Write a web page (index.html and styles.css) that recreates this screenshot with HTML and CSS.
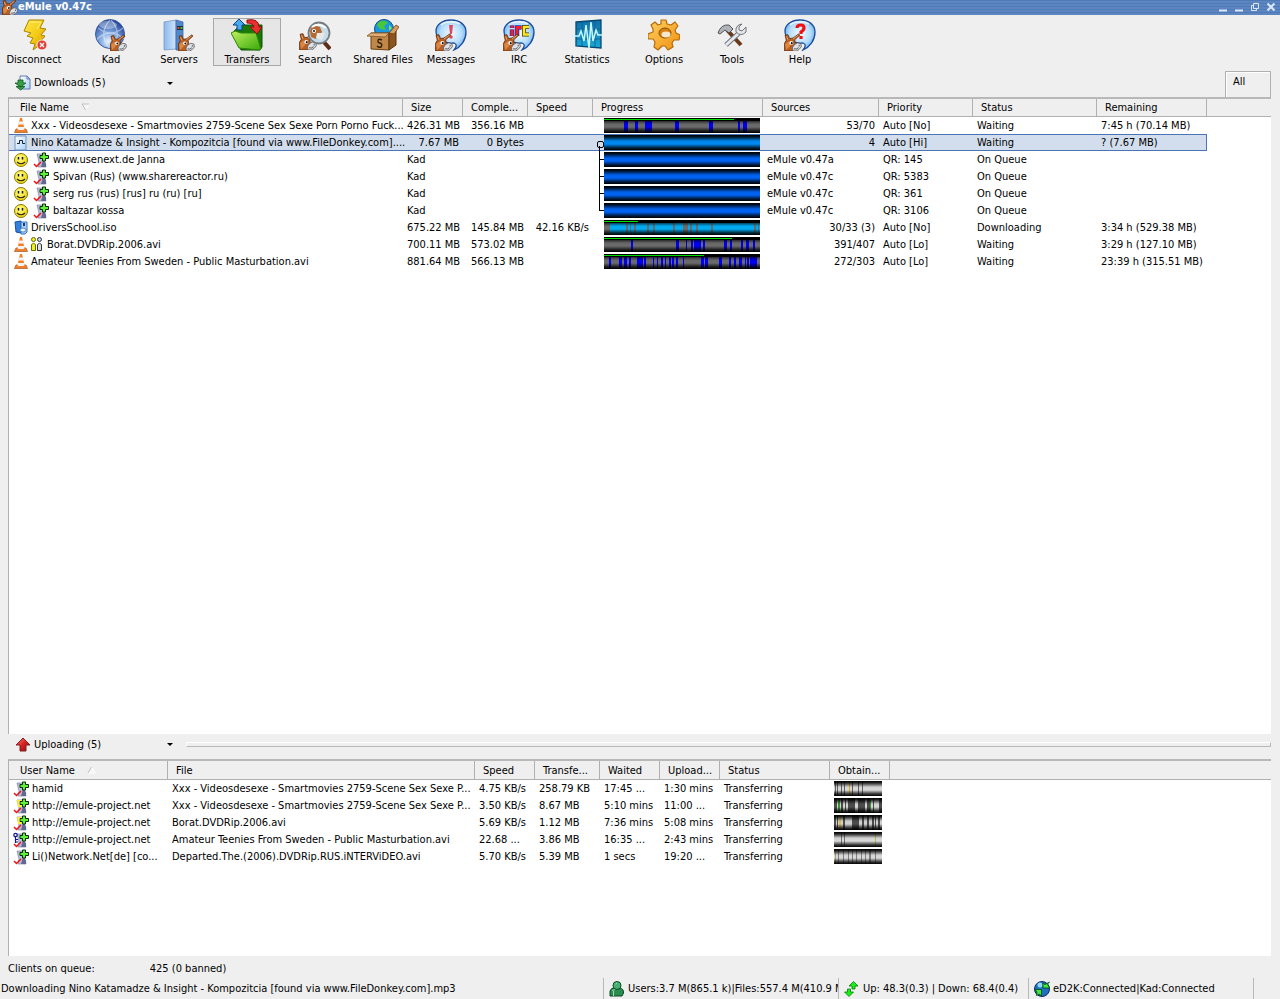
FILE: index.html
```html
<!DOCTYPE html>
<html lang="en">
<head>
<meta charset="utf-8">
<title>eMule v0.47c</title>
<link rel="stylesheet" href="styles.css">
</head>
<body>
<svg class="defs" width="0" height="0" aria-hidden="true">
  <defs>
    <linearGradient id="shade" x1="0" y1="0" x2="0" y2="1">
      <stop offset="0" stop-color="#000" stop-opacity="1"/><stop offset=".12" stop-color="#000" stop-opacity=".85"/>
      <stop offset=".4" stop-color="#000" stop-opacity=".08"/><stop offset=".6" stop-color="#000" stop-opacity=".04"/>
      <stop offset=".85" stop-color="#000" stop-opacity=".75"/><stop offset="1" stop-color="#000"/>
    </linearGradient>
    <linearGradient id="gold" x1="0" y1="0" x2="1" y2="1"><stop offset="0" stop-color="#ffe848"/><stop offset=".5" stop-color="#f4cc18"/><stop offset="1" stop-color="#d89c00"/></linearGradient>
    <radialGradient id="orb" cx=".45" cy=".75" r=".75"><stop offset="0" stop-color="#e8f4ff"/><stop offset=".4" stop-color="#7fa8e0"/><stop offset="1" stop-color="#1c3f96"/></radialGradient>
    <linearGradient id="tower" x1="0" y1="0" x2="1" y2="0"><stop offset="0" stop-color="#8db8ea"/><stop offset="1" stop-color="#cfe5fb"/></linearGradient>
    <linearGradient id="leaf" x1="0" y1="0" x2="1" y2="1"><stop offset="0" stop-color="#c0f060"/><stop offset="1" stop-color="#38a808"/></linearGradient>
    <radialGradient id="bub" cx=".5" cy=".45" r=".6"><stop offset="0" stop-color="#f4fbff"/><stop offset=".6" stop-color="#b4dcfa"/><stop offset="1" stop-color="#50a0ec"/></radialGradient>
    <linearGradient id="scope" x1="0" y1="0" x2="0" y2="1"><stop offset="0" stop-color="#1070a8"/><stop offset="1" stop-color="#18a8d8"/></linearGradient>
    <linearGradient id="gear" x1="0" y1="0" x2="1" y2="1"><stop offset="0" stop-color="#ffd060"/><stop offset="1" stop-color="#f09010"/></linearGradient>
    <radialGradient id="smile" cx=".4" cy=".35" r=".7"><stop offset="0" stop-color="#ffff90"/><stop offset="1" stop-color="#f0d000"/></radialGradient>
    <linearGradient id="redup" x1="0" y1="0" x2="1" y2="1"><stop offset="0" stop-color="#ff8078"/><stop offset=".5" stop-color="#d82020"/><stop offset="1" stop-color="#901010"/></linearGradient>
    <linearGradient id="bluefile" x1="0" y1="0" x2="1" y2="1"><stop offset="0" stop-color="#fff"/><stop offset="1" stop-color="#a8d0f8"/></linearGradient>

    <symbol id="mule" viewBox="0 0 16 16">
      <path d="M.5 16V9L2 6.500 1 2 3.500 1.500 5 5 8 4.500 13 .8 14 2 9.500 6 10 9 11 16Z" fill="#b86024" stroke="#5c2808" stroke-width=".7"/>
      <path d="M2.300 3 3.500 6M12.500 2 8 5.300" stroke="#eca870" stroke-width=".8"/>
      <path d="M1 10 4 7.500 6 8 5 12 2 15Z" fill="#dc8844"/>
      <circle cx="6.500" cy="8.800" r="1.700" fill="#fff"/><circle cx="6.900" cy="9" r=".9" fill="#111"/>
      <path d="M9 10.500Q12 7.500 15 9.500 16.500 12.500 13.500 14.500L11 16H8Q6.500 13 9 10.500Z" fill="#dde2e8" stroke="#4c4c50" stroke-width=".7"/><path d="M13.500 10.500V12M9 14Q11 15 13 13" fill="none" stroke="#444" stroke-width=".8"/>
    </symbol>
    <symbol id="bubble" viewBox="0 0 32 32">
      <path d="M16 1C25 1 31 6 31 13 31 21 26 28 19 31 22 27 22 25 19 24 9 25 1 20 1 12 1 6 7 1 16 1Z" fill="url(#bub)" stroke="#1c4c9c" stroke-width="1.3"/>
      <path d="M6 6C10 2 20 2 25 5" fill="none" stroke="#fff" stroke-opacity=".7" stroke-width="2"/>
    </symbol>
    <symbol id="cone" viewBox="0 0 16 16">
      <path d="M3 11H13L14.500 14.500H1.500Z" fill="#f08030" stroke="#a85818" stroke-width=".7"/>
      <path d="M7 0H9L11.700 12Q8 13.500 4.300 12Z" fill="#f08028"/><path d="M6.300 3.500H9.800L10.500 6.500H5.600ZM5 9H11L11.500 11.500Q8 12.500 4.500 11.500Z" fill="#f4f4f4"/>
    </symbol>
    <symbol id="smiley" viewBox="0 0 16 16">
      <circle cx="8" cy="8" r="6.500" fill="url(#smile)" stroke="#887800" stroke-width="1"/><path d="M5.500 5V7.500M9.500 5V7.500" stroke="#111" stroke-width="1.500"/><path d="M4 10Q8 13.500 12 10" fill="none" stroke="#222" stroke-width="1.100"/>
    </symbol>
    <symbol id="client" viewBox="0 0 16 16">
      <path d="M4 2H10L11 9 13 15H5L6 10Z" fill="#b8bcd8" stroke="#8088a8" stroke-width=".7"/><path d="M10 8Q14 10 13 15H8Z" fill="#606894"/>
      <path d="M9.500 1H12.500V3.500H15.500V6.500H12.500V9H9.500V6.500H7V3.500H9.500Z" fill="#60f038" stroke="#062806" stroke-width="1"/>
      <path d="M1 12 3.500 14.500 8 10" fill="none" stroke="#f01010" stroke-width="1.500"/>
    </symbol>
    <symbol id="client-y" viewBox="0 0 16 16"><use href="#client"/><path d="M4 2H9V3H6.500V7H9V9H5Z" fill="#f8f030"/></symbol>
    <symbol id="client-k" viewBox="0 0 16 16"><use href="#client"/><path d="M2.500 5V11M2.500 7.500H5M2.500 10H5" stroke="#101888" stroke-width="1.200"/><circle cx="2.500" cy="3" r="1.700" fill="#fff" stroke="#101888" stroke-width="1.200"/></symbol>
    <symbol id="blue" viewBox="0 0 156 15"><path d="M0 0H156V15H0Z" fill="#0068ff"/><path d="M0 0H156V15H0Z" fill="url(#shade)"/></symbol>
  </defs>
</svg>

<header class="titlebar">
  <svg class="i16" viewBox="0 0 16 16"><use href="#mule"/></svg>
  <h1>eMule v0.47c</h1>
  <button type="button" aria-label="Minimize to tray"><svg viewBox="0 0 10 10"><path d="M1 8.500H9" stroke-width="2"/></svg></button>
  <button type="button" aria-label="Minimize"><svg viewBox="0 0 10 10"><path d="M1 8.500H9" stroke-width="2"/></svg></button>
  <button type="button" aria-label="Restore"><svg viewBox="0 0 10 10"><path d="M3.500 1.500H8.500V6.500H3.500ZM3 3.500H1.500V8.500H6.500V7"/></svg></button>
  <button type="button" aria-label="Close"><svg viewBox="0 0 10 10"><path d="M1.500 1.500 8.500 8.500M8.500 1.500 1.500 8.500" stroke-width="2"/></svg></button>
</header>

<nav class="toolbar">
  <button type="button"><svg viewBox="0 0 32 32"><path d="M11 1 26 1 22 9 28 10 23 16 27 17 22 23 23 25 15 31 17 25 12 24 15 19 9 17 13 14 6 12Z" fill="url(#gold)" stroke="#a88400"/><path d="M12 3 23 3 19 10" fill="none" stroke="#fff080"/><circle cx="24" cy="26" r="5" fill="#e04038" stroke="#fff" stroke-width=".8"/><path d="M22 24 26 28M26 24 22 28" stroke="#fff" stroke-width="1.300"/></svg>Disconnect</button>
  <span class="gap"></span>
  <button type="button"><svg viewBox="0 0 32 32"><circle cx="15" cy="15" r="14.500" fill="url(#orb)" stroke="#3c5ca0"/><path d="M3 9Q16 19 28 9M2 20Q16 8 29 20M15 1Q3 14 14 29M16 1Q28 14 17 29" fill="none" stroke="#fff" stroke-opacity=".45" stroke-width="1.200"/><ellipse cx="13" cy="6" rx="9" ry="4" fill="#fff" opacity=".35"/><use href="#mule" x="15" y="15" width="17" height="17"/></svg>Kad</button>
  <button type="button"><svg viewBox="0 0 32 32"><path d="M1 3 13 1V30L1 31Z" fill="url(#tower)" stroke="#7898c8" stroke-width=".8"/><path d="M13 1 20 3V31H13Z" fill="#5088cc" stroke="#3c68a8" stroke-width=".8"/><path d="M14 7H20V11H14Z" fill="#183048"/><path d="M14.500 9H16.500" stroke="#f04020" stroke-width="2"/><path d="M17.500 9H19.500" stroke="#30d030" stroke-width="2"/><use href="#mule" x="15" y="15" width="17" height="17"/></svg>Servers</button>
  <button type="button" class="on" aria-pressed="true"><svg viewBox="0 0 32 32"><path d="M3 12 10 6H31V28L29 31H10Z" fill="#187808" stroke="#0c5004"/><path d="M0 14 4 12 10 14H25L30 30 28 31 8 29Z" fill="url(#leaf)" stroke="#2c8408"/><path d="M8 0 14 6H11V11H6V6H2Z" fill="#48a8f0" stroke="#0c4088"/><path d="M16 1Q28-1 28 8H31L26 15 19 8H23Q22 4 16 4Z" fill="#e83030" stroke="#980c0c"/></svg>Transfers</button>
  <button type="button"><svg viewBox="0 0 32 32"><use href="#mule" x="0" y="13" width="18" height="18"/><path d="M24 22 31 30" stroke="#5c2c18" stroke-width="4"/><circle cx="20" cy="14" r="10.500" fill="#c4dcec" stroke="#777c80" stroke-width="1.800"/><path d="M11 12Q13 5 21 8L23 13 17 20 12 18Z" fill="#b46834"/><path d="M18 14 26 14 23 21 17 19Z" fill="#e8e8e8"/><circle cx="15" cy="12" r="2" fill="#fff"/><circle cx="15" cy="12" r="1" fill="#111"/><path d="M13 8Q20 3 27 9" fill="none" stroke="#fff" stroke-width="2"/></svg>Search</button>
  <button type="button"><svg viewBox="0 0 32 32"><circle cx="17" cy="10" r="9.500" fill="#1898e0" stroke="#104880"/><path d="M12 3Q18 0 21 4L17 7 19 11 13 10 10 6Z" fill="#48c838"/><path d="M22 6 25 9 22 12Z" fill="#88e060"/><path d="M4 14H22V31L4 30Z" fill="#c08848" stroke="#704010"/><path d="M22 14 29 11V26L22 31Z" fill="#8c5420" stroke="#5c3008"/><path d="M4 14 0 17 18 18 22 14Z" fill="#e0b078" stroke="#805020" stroke-width=".8"/><path d="M22 14 29 6 32 8 27 15Z" fill="#d8a060" stroke="#704010" stroke-width=".8"/><path d="M15 21Q11 19 11 22 11 24 13 24 16 25 14 28 12 29 10 27" fill="none" stroke="#382008" stroke-width="1.400"/></svg>Shared Files</button>
  <button type="button"><svg viewBox="0 0 32 32"><use href="#bubble"/><path d="M14 6H18L17 15H15Z" fill="#e04860"/><circle cx="16" cy="18" r="1.800" fill="#e04860"/><use href="#mule" x="0" y="14" width="18" height="18"/></svg>Messages</button>
  <button type="button"><svg viewBox="0 0 32 32"><use href="#bubble"/><path d="M9 10.500V17M9 6.500V9" stroke="#2030c0" stroke-width="4.500"/><path d="M9 10.500V17M9 6.500V9" stroke="#f02020" stroke-width="2.800"/><path d="M14 17V8.500H18.500" fill="none" stroke="#2030c0" stroke-width="4.500"/><path d="M14 17V8.500H18.500" fill="none" stroke="#f02020" stroke-width="2.800"/><path d="M26 8H21V15.500H26" fill="none" stroke="#403800" stroke-width="4"/><path d="M26 8H21V15.500H26" fill="none" stroke="#ffe820" stroke-width="2.500"/><use href="#mule" x="0" y="14" width="18" height="18"/></svg>IRC</button>
  <button type="button"><svg viewBox="0 0 32 32"><path d="M5 3 30 1V29L5 27Z" fill="url(#scope)" stroke="#084870" stroke-width="1.300"/><path d="M5 10H29M5 20H29M11 3V27M24 2V28" stroke="#0c5888" stroke-width=".7"/><path d="M1 17H8L10 12 13 22 15 6 18 29 20 3 22 22 25 11 27 16H32" fill="none" stroke="#c8f8ff" stroke-width="1.500"/></svg>Statistics</button>
  <span class="gap"></span>
  <button type="button"><svg viewBox="0 0 32 32"><path d="M13 1 18 1 19 5 23 6 27 3 30 7 27 11 28 14 32 16 31 21 26 21 24 24 25 28 20 31 17 27 14 27 10 31 6 28 7 23 5 20 0 20 0 15 5 13 5 10 3 6 7 3 10 6 13 5Z" fill="url(#gear)" stroke="#b46c08" stroke-width="1.200" stroke-linejoin="round"/><ellipse cx="17" cy="14" rx="6" ry="5" fill="#d88010" stroke="#8c5000"/><ellipse cx="18" cy="15.500" rx="4.500" ry="3" fill="#f6e8cc"/></svg>Options</button>
  <button type="button"><svg viewBox="0 0 32 32"><path d="M11 11 25 26" stroke="#683818" stroke-width="4"/><path d="M2 14Q5 5 13 6L17 10 13 14 9 11 4 15Z" fill="#b0b4b8" stroke="#505458"/><path d="M10 26 23 14" stroke="#70747a" stroke-width="5"/><path d="M10 26 23 14" stroke="#e4e8ec" stroke-width="3"/><path d="M26 5Q19 6 20 13 25 18 30 13L30 8 26 12 23 11 23 8Z" fill="#e4e8ec" stroke="#70747a"/></svg>Tools</button>
  <button type="button"><svg viewBox="0 0 32 32"><use href="#bubble"/><path d="M13 9Q13 6 17 6 20 6 20 9 20 11 17 13V15" fill="none" stroke="#f01010" stroke-width="3.200"/><path d="M15.400 17H18.600V20H15.400Z" fill="#f01010"/><use href="#mule" x="0" y="14" width="18" height="18"/></svg>Help</button>
</nav>

<main>
  <div class="listhead">
    <button type="button" class="drop"><svg class="i16" viewBox="0 0 16 16"><path d="M5 1H12L15 4V14H5Z" fill="url(#bluefile)" stroke="#6078b0"/><path d="M12 1V4H15" fill="none" stroke="#6078b0"/><path d="M3 5H8V8H11L5.500 12 0 8H3ZM1 11.500H10L5.500 15Z" fill="#38a048" stroke="#105820" stroke-width=".8"/></svg><span>Downloads (5)</span><i class="caret"></i></button>
    <button type="button" class="tab">All</button>
  </div>
  <section class="panel downloads" aria-label="Downloads">
    <table>
      <colgroup><col class="w394"><col class="w60"><col class="w65"><col class="w65"><col class="w170"><col class="w116"><col class="w94"><col class="w124"><col class="w110"><col></colgroup>
      <thead><tr><th>File Name<svg class="sort" viewBox="0 0 9 8"><path d="M1 1H8L4.500 7Z" fill="#f4f4f4" stroke="#fff"/><path d="M8 1H1L4.500 7" fill="none" stroke="#bbb"/></svg></th><th>Size</th><th>Comple...</th><th>Speed</th><th>Progress</th><th>Sources</th><th>Priority</th><th>Status</th><th>Remaining</th><th></th></tr></thead>
      <tbody>
        <tr><td><div class="name"><svg class="i16" viewBox="0 0 16 16"><use href="#cone"/></svg>Xxx - Videosdesexe - Smartmovies 2759-Scene Sex Sexe Porn Porno Fuck...</div></td><td class="r">426.31 MB</td><td class="r">356.16 MB</td><td></td>
          <td class="bar"><svg viewBox="0 0 156 15" preserveAspectRatio="none"><path d="M0 0H156V15H0Z" fill="#707070"/><path fill="#0000ff" d="M20 0h4v15h-4zM31 0h3v15h-3zM41 0h7v15h-7zM71 0h4v15h-4zM105 0h4v15h-4zM134 0h2v15h-2zM139 0h4v15h-4z"/><path d="M0 0H156V15H0Z" fill="url(#shade)"/><path d="M0 0H156V3H0Z"/><path d="M0 1H130V2H0Z" fill="#00e000"/></svg></td><td class="r">53/70</td><td>Auto [No]</td><td>Waiting</td><td>7:45 h (70.14 MB)</td><td></td></tr>
        <tr class="sel"><td><div class="name"><svg class="i16" viewBox="0 0 16 16"><path d="M2 1H13V15H2Z" fill="url(#bluefile)" stroke="#7090b8"/><path d="M4 8.500H6.500V5.500H9.500V8.500H12" fill="none" stroke="#123"/></svg>Nino Katamadze &amp; Insight - Kompozitcia [found via www.FileDonkey.com]....</div></td><td class="r">7.67 MB</td><td class="r">0 Bytes</td><td></td>
          <td class="bar root"><svg viewBox="0 0 156 15" preserveAspectRatio="none"><path d="M0 0H156V15H0Z" fill="#0090ff"/><path d="M0 0H156V15H0Z" fill="url(#shade)"/></svg></td><td class="r">4</td><td>Auto [Hi]</td><td>Waiting</td><td>? (7.67 MB)</td><td></td></tr>
        <tr><td><div class="name src"><svg class="i16" viewBox="0 0 16 16"><use href="#smiley"/></svg><svg class="i16" viewBox="0 0 16 16"><use href="#client"/></svg>www.usenext.de Janna</div></td><td>Kad</td><td></td><td></td><td class="bar kid"><svg viewBox="0 0 156 15" preserveAspectRatio="none"><use href="#blue"/></svg></td><td>eMule v0.47a</td><td>QR: 145</td><td>On Queue</td><td></td><td></td></tr>
        <tr><td><div class="name src"><svg class="i16" viewBox="0 0 16 16"><use href="#smiley"/></svg><svg class="i16" viewBox="0 0 16 16"><use href="#client"/></svg>Spivan (Rus) (www.sharereactor.ru)</div></td><td>Kad</td><td></td><td></td><td class="bar kid"><svg viewBox="0 0 156 15" preserveAspectRatio="none"><use href="#blue"/></svg></td><td>eMule v0.47c</td><td>QR: 5383</td><td>On Queue</td><td></td><td></td></tr>
        <tr><td><div class="name src"><svg class="i16" viewBox="0 0 16 16"><use href="#smiley"/></svg><svg class="i16" viewBox="0 0 16 16"><use href="#client"/></svg>serg rus (rus) [rus] ru (ru) [ru]</div></td><td>Kad</td><td></td><td></td><td class="bar kid"><svg viewBox="0 0 156 15" preserveAspectRatio="none"><use href="#blue"/></svg></td><td>eMule v0.47c</td><td>QR: 361</td><td>On Queue</td><td></td><td></td></tr>
        <tr><td><div class="name src"><svg class="i16" viewBox="0 0 16 16"><use href="#smiley"/></svg><svg class="i16" viewBox="0 0 16 16"><use href="#client"/></svg>baltazar kossa</div></td><td>Kad</td><td></td><td></td><td class="bar kid last"><svg viewBox="0 0 156 15" preserveAspectRatio="none"><use href="#blue"/></svg></td><td>eMule v0.47c</td><td>QR: 3106</td><td>On Queue</td><td></td><td></td></tr>
        <tr><td><div class="name"><svg class="i16" viewBox="0 0 16 16"><path d="M2 2 8 1V13L3 12Z" fill="#3080e0" stroke="#1850a0"/><path d="M8 2H14V12Q13 15 8 14Z" fill="#a8d0f8" stroke="#3870b8"/><path d="M10 3H12V6H10Z" fill="#203868"/><ellipse cx="10" cy="10" rx="3" ry="2" fill="#e8f4ff" stroke="#3870b8" stroke-width=".8"/></svg>DriversSchool.iso</div></td><td class="r">675.22 MB</td><td class="r">145.84 MB</td><td class="r">42.16 KB/s</td>
          <td class="bar"><svg viewBox="0 0 156 15" preserveAspectRatio="none"><path d="M0 0H156V15H0Z" fill="#00b4ff"/><path fill="#707070" d="M0 0h6v15h-6zM22 0h2v15h-2zM26 0h1v15h-1zM30 0h2v15h-2zM43 0h2v15h-2zM49 0h2v15h-2zM69 0h2v15h-2zM79 0h5v15h-5zM86 0h2v15h-2zM92 0h2v15h-2zM107 0h2v15h-2zM150 0h2v15h-2zM154 0h1v15h-1z"/><path d="M0 0H156V15H0Z" fill="url(#shade)"/><path d="M0 0H156V3H0Z"/><path d="M0 1H34V2H0Z" fill="#00e000"/></svg></td><td class="r">30/33 (3)</td><td>Auto [No]</td><td>Downloading</td><td>3:34 h (529.38 MB)</td><td></td></tr>
        <tr><td><div class="name"><svg class="i16" viewBox="0 0 16 16"><use href="#cone"/></svg><svg class="i16 pair" viewBox="0 0 16 16"><g stroke="#686800"><circle cx="2.500" cy="2.500" r="2" fill="#f0f020"/><path d="M.5 7.500Q2.500 5 4.500 7.500V13.500H.5Z" fill="#f0f020"/></g><g stroke="#333"><circle cx="8.500" cy="2.500" r="2" fill="#c8d8e8"/><path d="M6.500 7.500Q8.500 5 10.500 7.500V13.500H6.500Z" fill="#e0e0e0"/></g></svg>Borat.DVDRip.2006.avi</div></td><td class="r">700.11 MB</td><td class="r">573.02 MB</td><td></td>
          <td class="bar"><svg viewBox="0 0 156 15" preserveAspectRatio="none"><path d="M0 0H156V15H0Z" fill="#707070"/><path fill="#0000ff" d="M27 0h2v15h-2zM72 0h3v15h-3zM82 0h1v15h-1zM87 0h2v15h-2zM90 0h7v15h-7zM99 0h2v15h-2zM120 0h3v15h-3zM126 0h2v15h-2zM137 0h2v15h-2zM142 0h3v15h-3zM149 0h2v15h-2z"/><path d="M0 0H156V15H0Z" fill="url(#shade)"/><path d="M0 0H156V3H0Z"/><path d="M0 1H128V2H0Z" fill="#00e000"/></svg></td><td class="r">391/407</td><td>Auto [Lo]</td><td>Waiting</td><td>3:29 h (127.10 MB)</td><td></td></tr>
        <tr><td><div class="name"><svg class="i16" viewBox="0 0 16 16"><use href="#cone"/></svg>Amateur Teenies From Sweden - Public Masturbation.avi</div></td><td class="r">881.64 MB</td><td class="r">566.13 MB</td><td></td>
          <td class="bar"><svg viewBox="0 0 156 15" preserveAspectRatio="none"><path d="M0 0H156V15H0Z" fill="#707070"/><path fill="#0000ff" d="M5 0h2v15h-2zM15 0h3v15h-3zM20 0h3v15h-3zM25 0h2v15h-2zM33 0h6v15h-6zM40 0h2v15h-2zM49 0h1v15h-1zM53 0h1v15h-1zM57 0h2v15h-2zM61 0h1v15h-1zM65 0h2v15h-2zM68 0h2v15h-2zM72 0h2v15h-2zM79 0h1v15h-1zM97 0h3v15h-3zM101 0h3v15h-3zM115 0h3v15h-3zM125 0h2v15h-2zM130 0h2v15h-2zM135 0h3v15h-3zM141 0h1v15h-1zM143 0h2v15h-2zM146 0h7v15h-7z"/><path d="M0 0H156V15H0Z" fill="url(#shade)"/><path d="M0 0H156V3H0Z"/><path d="M0 1H100V2H0Z" fill="#00e000"/></svg></td><td class="r">272/303</td><td>Auto [Lo]</td><td>Waiting</td><td>23:39 h (315.51 MB)</td><td></td></tr>
      </tbody>
    </table>
  </section>

  <div class="listhead up">
    <button type="button" class="drop"><svg class="i16" viewBox="0 0 16 16"><path d="M8 1 15 8H11V14H5V8H1Z" fill="url(#redup)" stroke="#802020"/></svg><span>Uploading (5)</span><i class="caret"></i></button>
    <div class="splitter"></div>
  </div>
  <section class="panel uploads" aria-label="Uploading">
    <table>
      <colgroup><col class="w159"><col class="w307"><col class="w60"><col class="w65"><col class="w60"><col class="w60"><col class="w110"><col class="w60"><col></colgroup>
      <thead><tr><th>User Name<svg class="sort" viewBox="0 0 9 8"><path d="M1 7H8L4.500 1Z" fill="#f4f4f4" stroke="#fff"/><path d="M1 7 4.500 1" stroke="#bbb"/></svg></th><th>File</th><th>Speed</th><th>Transfe...</th><th>Waited</th><th>Upload...</th><th>Status</th><th>Obtain...</th><th></th></tr></thead>
      <tbody>
        <tr><td><div class="name"><svg class="i16" viewBox="0 0 16 16"><use href="#client"/></svg>hamid</div></td><td>Xxx - Videosdesexe - Smartmovies 2759-Scene Sex Sexe P...</td><td>4.75 KB/s</td><td>258.79 KB</td><td>17:45 ...</td><td>1:30 mins</td><td>Transferring</td><td class="bar"><svg viewBox="0 0 48 15" preserveAspectRatio="none"><path d="M0 0H48V15H0Z" fill="#e4e4e4"/><path fill="#666" d="M1 0h1v15h-1zM3 0h1v15h-1zM7 0h1v15h-1zM10 0h1v15h-1zM18 0h1v15h-1zM24 0h1v15h-1zM28 0h1v15h-1z"/><path fill="#e8b820" d="M15 0h1v15h-1z"/><path d="M0 0H48V15H0Z" fill="url(#shade)"/></svg></td><td></td></tr>
        <tr><td><div class="name"><svg class="i16" viewBox="0 0 16 16"><use href="#client-y"/></svg>http://emule-project.net</div></td><td>Xxx - Videosdesexe - Smartmovies 2759-Scene Sex Sexe P...</td><td>3.50 KB/s</td><td>8.67 MB</td><td>5:10 mins</td><td>11:00 ...</td><td>Transferring</td><td class="bar"><svg viewBox="0 0 48 15" preserveAspectRatio="none"><path d="M0 0H48V15H0Z" fill="#e0e0e0"/><path fill="#505050" d="M0 0h3v15h-3zM7 0h2v15h-2zM11 0h1v15h-1zM14 0h7v15h-7zM24 0h7v15h-7zM33 0h3v15h-3zM39 0h1v15h-1zM45 0h3v15h-3z"/><path fill="#38a030" d="M4 0h2v15h-2zM36 0h1v15h-1z"/><path d="M0 0H48V15H0Z" fill="url(#shade)"/></svg></td><td></td></tr>
        <tr><td><div class="name"><svg class="i16" viewBox="0 0 16 16"><use href="#client-y"/></svg>http://emule-project.net</div></td><td>Borat.DVDRip.2006.avi</td><td>5.69 KB/s</td><td>1.12 MB</td><td>7:36 mins</td><td>5:08 mins</td><td>Transferring</td><td class="bar"><svg viewBox="0 0 48 15" preserveAspectRatio="none"><path d="M0 0H48V15H0Z" fill="#dcdcdc"/><path fill="#505050" d="M0 0h2v15h-2zM3 0h1v15h-1zM9 0h2v15h-2zM18 0h7v15h-7zM28 0h2v15h-2zM33 0h2v15h-2zM38 0h2v15h-2zM41 0h1v15h-1zM44 0h2v15h-2z"/><path fill="#e8c850" d="M5 0h2v15h-2z"/><path d="M0 0H48V15H0Z" fill="url(#shade)"/></svg></td><td></td></tr>
        <tr><td><div class="name"><svg class="i16" viewBox="0 0 16 16"><use href="#client-k"/></svg>http://emule-project.net</div></td><td>Amateur Teenies From Sweden - Public Masturbation.avi</td><td>22.68 ...</td><td>3.86 MB</td><td>16:35 ...</td><td>2:43 mins</td><td>Transferring</td><td class="bar"><svg viewBox="0 0 48 15" preserveAspectRatio="none"><path d="M0 0H48V15H0Z" fill="#e4e4e4"/><path fill="#777" d="M7 0h1v15h-1zM10 0h1v15h-1z"/><path fill="#c8c850" d="M41 0h1v15h-1z"/><path d="M0 0H48V15H0Z" fill="url(#shade)"/></svg></td><td></td></tr>
        <tr><td><div class="name"><svg class="i16" viewBox="0 0 16 16"><use href="#client"/></svg>Li()Network.Net[de] [co...</div></td><td>Departed.The.(2006).DVDRip.RUS.iNTERViDEO.avi</td><td>5.70 KB/s</td><td>5.39 MB</td><td>1 secs</td><td>19:20 ...</td><td>Transferring</td><td class="bar"><svg viewBox="0 0 48 15" preserveAspectRatio="none"><path d="M0 0H48V15H0Z" fill="#e4e4e4"/><path fill="#888" d="M4 0h1v15h-1zM9 0h1v15h-1zM14 0h1v15h-1zM18 0h1v15h-1zM22 0h1v15h-1zM27 0h1v15h-1zM31 0h1v15h-1zM35 0h2v15h-2zM41 0h1v15h-1z"/><path fill="#b8b060" d="M1 0h1v15h-1z"/><path d="M0 0H48V15H0Z" fill="url(#shade)"/></svg></td><td></td></tr>
      </tbody>
    </table>
  </section>
  <div class="queue"><span>Clients on queue:</span><span>425 (0 banned)</span></div>
</main>

<footer class="status">
  <div class="msg">Downloading Nino Katamadze &amp; Insight - Kompozitcia [found via www.FileDonkey.com].mp3</div>
  <div><svg class="i16" viewBox="0 0 16 16"><path d="M1 14V10Q2 6.500 6 7H11Q15 8 14.500 12L13 15H1Z" fill="#2c8c50" stroke="#0c4824"/><circle cx="8" cy="4.500" r="4" fill="#48b070" stroke="#0c4824"/><path d="M4.500 10V15M3 9.500 6 8.500M6.500 3 8 2" stroke="#98e0b0" fill="none"/></svg>Users:3.7 M(865.1 k)|Files:557.4 M(410.9 M</div>
  <div><svg class="i16" viewBox="0 0 16 16"><g fill="#18f018" stroke="#087808" stroke-width=".8"><path d="M9.500 .5 14 5H11V8H8V5H5Z"/><path d="M5 15.500 .5 11H3.500V8H6.500V11H9.500Z"/></g></svg>Up: 48.3(0.3) | Down: 68.4(0.4)</div>
  <div><svg class="i16" viewBox="0 0 16 16"><circle cx="8" cy="8" r="7.500" fill="#2070c0" stroke="#0c2860"/><circle cx="6" cy="4" r="2.500" fill="#90d8f8"/><path d="M15.500 1 13.500 3 15.500 7H9V2L11 3.500ZM1 8.500H7.500V15L5.500 13 2.500 14.500 3 11Z" fill="#40e840" stroke="#044808" stroke-width=".8"/></svg>eD2K:Connected|Kad:Connected</div>
  <div></div>
</footer>
</body>
</html>
```
FILE: styles.css
```css
* { box-sizing: border-box; }
body {
  margin: 0;
  height: 100vh;
  display: flex;
  flex-direction: column;
  overflow: hidden;
  background: #efefef;
  color: #000;
  font: 11px/14px "DejaVu Sans Condensed", "DejaVu Sans", sans-serif;
}
button { font: inherit; color: inherit; border: 0; padding: 0; background: none; }
svg { display: block; flex: none; }
.defs { position: absolute; }
.i16 { width: 16px; height: 16px; }

.titlebar {
  display: flex;
  align-items: center;
  gap: 6px;
  height: 15px;
  padding: 0 4px 2px 2px;
  background: repeating-linear-gradient(#4f7ab8 0 1px, #5d86c0 1px 3px);
  color: #fff;
}
.titlebar h1 { flex: 1; margin: 0 0 0 -6px; font-size: 11px; line-height: 12px; }
.titlebar button svg { width: 10px; height: 10px; fill: none; stroke: #dce8fa; }

.toolbar { display: flex; height: 52px; padding-top: 3px; }
.toolbar button {
  display: flex;
  flex-direction: column;
  align-items: center;
  width: 68px;
  height: 48px;
  line-height: 14px;
  white-space: nowrap;
}
.toolbar button svg { width: 32px; height: 32px; margin: 1px 0 2px; }
.toolbar .on { border: 1px solid #a8a8a8; background: #e6e6e6; }
.toolbar .on svg { margin-top: 0; }
.toolbar .gap { width: 9px; }

main { flex: 1; display: flex; flex-direction: column; min-height: 0; padding: 0 9px 0 8px; }
.listhead { display: flex; align-items: center; height: 30px; padding-top: 2px; }
.drop { display: flex; align-items: center; width: 172px; padding-left: 7px; text-align: left; }
.drop span { flex: 1; padding-left: 3px; white-space: nowrap; }
.caret { width: 0; height: 0; margin-right: 7px; border: 3px solid transparent; border-top-color: #000; border-bottom: 0; }
.tab {
  align-self: flex-end;
  width: 46px;
  height: 26px;
  margin-left: auto;
  padding: 0 0 6px 7px;
  text-align: left;
  border: 1px solid #b0b0b0;
  border-bottom: 0;
  box-shadow: inset 1px 1px #fff;
}
.up { height: 25px; padding: 0 0 4px; }
.splitter { flex: 1; height: 5px; margin-left: 6px; border: 1px solid #fff; border-bottom-color: #b8b8b8; border-right-color: #b8b8b8; }

.panel { min-height: 0; overflow: hidden; background: #fff; border-top: 2px solid #b8b8b8; border-left: 1px solid #b0b0b0; }
.downloads { flex: 1; }
.uploads { flex: 0 1 197px; }
table { width: 100%; table-layout: fixed; border-collapse: separate; border-spacing: 0; }
th {
  height: 18px;
  padding: 0 0 0 8px;
  background: #efefef;
  border-right: 1px solid #b0b0b0;
  border-bottom: 1px solid #b0b0b0;
  font-weight: normal;
  text-align: left;
  white-space: nowrap;
  overflow: hidden;
}
.uploads th { height: 19px; padding-top: 1px; }
th:first-child { padding-left: 11px; }
th:last-child { border-right: 0; }
.sort { display: inline-block; width: 9px; height: 8px; margin-left: 12px; }
td { height: 17px; padding: 1px 4px 0; line-height: 16px; white-space: nowrap; }
td:first-child { padding: 1px 0 0 4px; }
.r { text-align: right; }
.name { display: flex; align-items: center; height: 16px; gap: 2px; }
.name .pair { margin-right: -2px; }
.src { gap: 4px; }
.sel td { line-height: 14px; background: #d2deed; border: 1px solid #4a74b4; border-width: 1px 0; }
.sel .name { height: 14px; }
.sel td:nth-last-child(2) { border-right-width: 1px; }
.sel td:last-child { background: none; border: 0; }
.bar { position: relative; padding: 1px 3px 1px 11px; }
.bar svg { width: 100%; height: 15px; }
.sel .bar { padding-top: 0; padding-bottom: 0; }
.uploads .bar { padding: 1px 8px 1px 4px; }
.uploads .name { gap: 3px; }
/* tree connectors between a file and its sources */
.kid::before { content: ""; position: absolute; left: 6px; top: 0; width: 1px; height: 17px; background: #000; }
.kid::after { content: ""; position: absolute; left: 6px; top: 8px; width: 5px; height: 1px; background: #000; }
.last::before { height: 9px; }
.root::before { content: ""; position: absolute; left: 4px; top: 6px; width: 5px; height: 5px; border: 1px solid #000; border-radius: 2px; }
.root::after { content: ""; position: absolute; left: 6px; top: 11px; width: 1px; height: 5px; background: #000; }

.w394 { width: 394px; } .w307 { width: 307px; } .w170 { width: 170px; } .w159 { width: 159px; }
.w124 { width: 124px; } .w116 { width: 116px; } .w110 { width: 110px; } .w94 { width: 94px; }
.w65 { width: 65px; } .w60 { width: 60px; }

.queue { display: flex; align-items: center; gap: 55px; height: 22px; padding-top: 4px; }
.status { display: grid; grid-template-columns: 1fr 235px 190px 225px 27px; height: 21px; }
.status div { display: flex; align-items: center; gap: 3px; padding: 1px 0 0 5px; overflow: hidden; white-space: nowrap; border-left: 1px solid #b8b8b8; }
.status .msg { padding-left: 1px; border: 0; }
```
